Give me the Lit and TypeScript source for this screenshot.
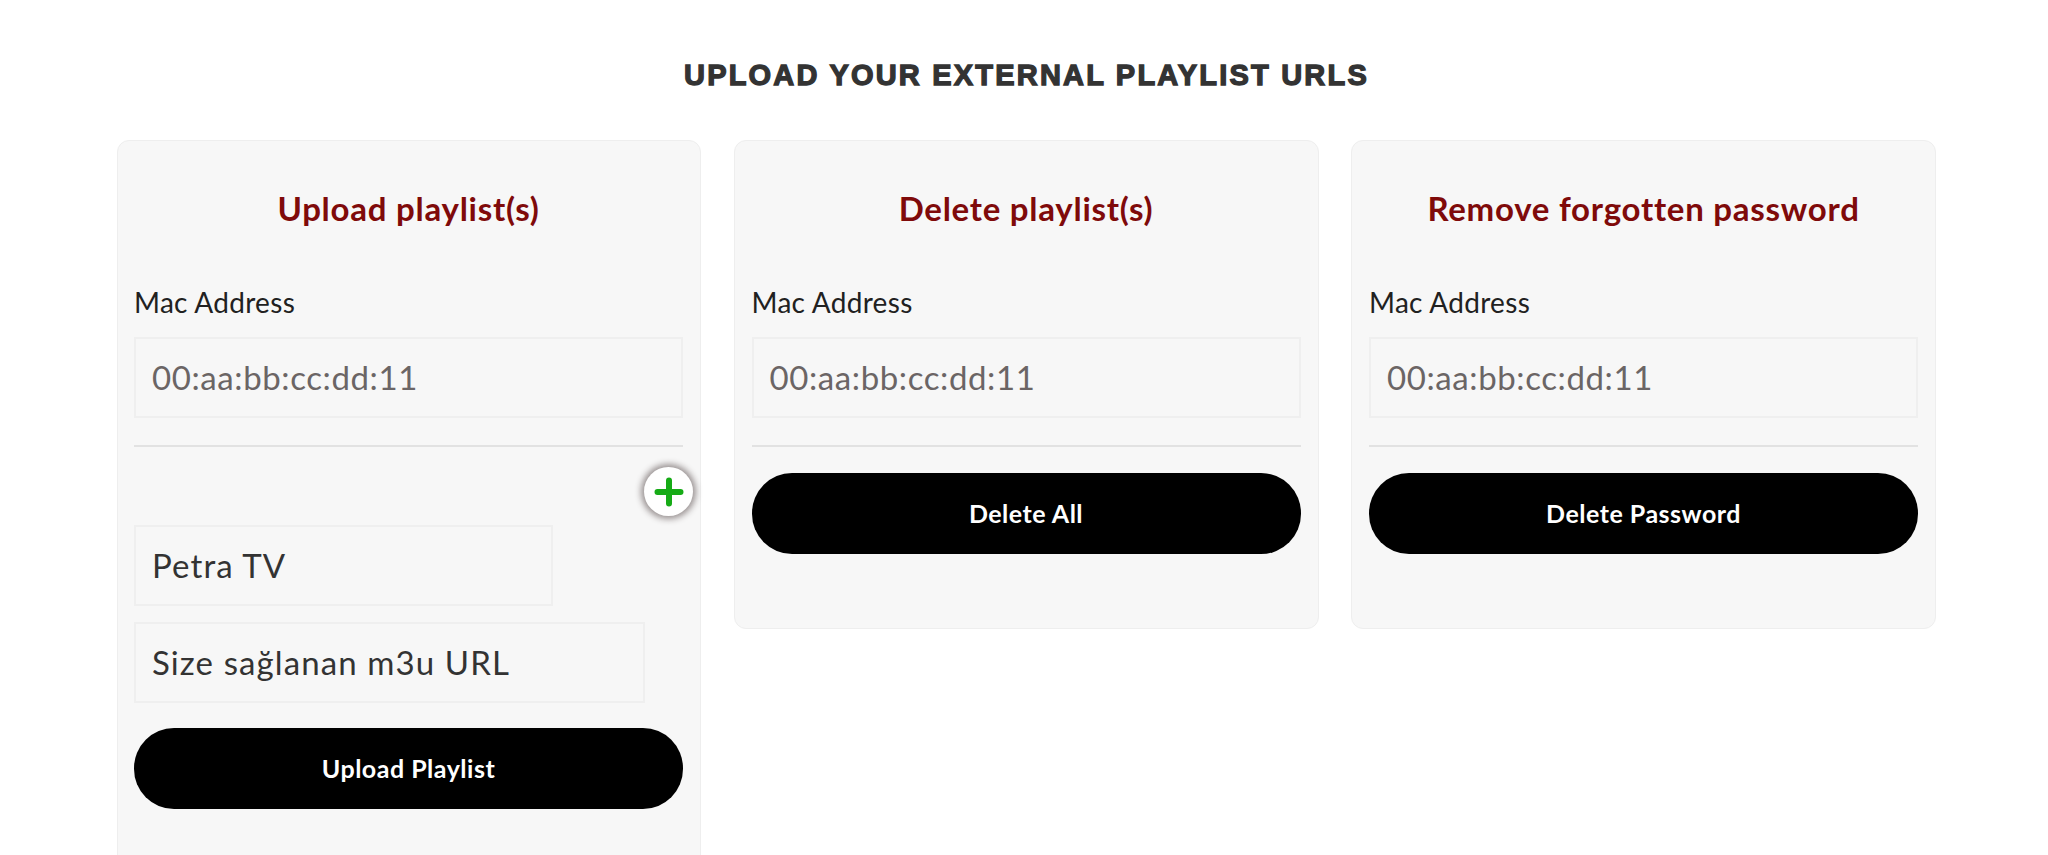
import { LitElement, html, css } from "lit";
import { customElement } from "lit/decorators.js";

@customElement("app-root")
export class AppRoot extends LitElement {
  static styles = css`
    :host {
      display: block;
      height: 855px;
      overflow: hidden;
      background: #fff;
      font-family: "Lato", "Noto Sans", sans-serif;
      color: #212121;
    }
    .page {
      padding: 58px 112px 0 117px;
    }
    h1 {
      margin: 0 0 48px;
      height: 34px;
      line-height: 34px;
      text-align: center;
      font-family: "Liberation Sans", Arial, sans-serif;
      font-weight: 700;
      font-size: 29px;
      letter-spacing: 2.2px;
      color: #333;
      -webkit-text-stroke: 1.3px #333;
    }
    .grid {
      display: grid;
      grid-template-columns: 584px 585px 585px;
      column-gap: 32.5px;
      align-items: start;
    }
    .card {
      box-sizing: border-box;
      background: #f7f7f7;
      border: 1px solid #eeeeee;
      border-radius: 12px;
      padding: 0 17px 74px;
      display: flex;
      flex-direction: column;
    }
    .card.tall {
      min-height: 760px;
      padding-left: 16px;
    }
    h2 {
      margin: 47px 0 0;
      height: 40px;
      line-height: 40px;
      text-align: center;
      font-size: 33px;
      font-weight: 700;
      letter-spacing: 0.75px;
      color: #7f0a0a;
    }
    label {
      display: block;
      margin-top: 54px;
      height: 40px;
      line-height: 40px;
      font-size: 28px;
      letter-spacing: 0.3px;
    }
    .field {
      box-sizing: border-box;
      height: 81px;
      border: 2px solid #efefef;
      display: flex;
      align-items: center;
      padding: 0 16px 2px;
      font-size: 33px;
      letter-spacing: 1.1px;
      color: #333;
    }
    .mac {
      margin-top: 15px;
      letter-spacing: 0.6px;
      color: #6b6565;
    }
    .name {
      width: 419px;
    }
    .url {
      width: 511px;
      margin-top: 16px;
    }
    hr {
      margin: 27px 0 0;
      border: 0;
      height: 2px;
      background: #e2e2e2;
    }
    .add-row {
      display: flex;
      justify-content: flex-end;
      margin: 20px -10px 9px 0;
    }
    .add {
      box-sizing: border-box;
      width: 49px;
      height: 49px;
      border-radius: 50%;
      border: 0;
      padding: 1px 0 0;
      background: #fff;
      box-shadow: 0 0 6px 3px #999292;
      display: flex;
      align-items: center;
      justify-content: center;
    }
    .btn {
      display: block;
      width: 100%;
      height: 81px;
      margin-top: 25px;
      padding: 0 0 2px;
      border: 0;
      border-radius: 40px;
      background: #000;
      color: #fff;
      font-family: inherit;
      font-weight: 700;
      font-size: 25px;
      letter-spacing: 0.5px;
    }
    .sep {
      margin-top: 26px;
    }
  `;

  render() {
    return html`
      <div class="page">
        <h1>UPLOAD YOUR EXTERNAL PLAYLIST URLS</h1>
        <div class="grid">
          <section class="card tall">
            <h2>Upload playlist(s)</h2>
            <label>Mac Address</label>
            <div class="field mac">00:aa:bb:cc:dd:11</div>
            <hr />
            <div class="add-row">
              <button class="add" aria-label="Add">
                <svg width="30" height="30" viewBox="0 0 30 30">
                  <path d="M15 3.5V26.5M3.5 15H26.5" stroke="#16ab16" stroke-width="6" stroke-linecap="round" fill="none" />
                </svg>
              </button>
            </div>
            <div class="field name">Petra TV</div>
            <div class="field url">Size sağlanan m3u URL</div>
            <button class="btn">Upload Playlist</button>
          </section>
          <section class="card">
            <h2>Delete playlist(s)</h2>
            <label>Mac Address</label>
            <div class="field mac">00:aa:bb:cc:dd:11</div>
            <hr />
            <button class="btn sep">Delete All</button>
          </section>
          <section class="card">
            <h2>Remove forgotten password</h2>
            <label>Mac Address</label>
            <div class="field mac">00:aa:bb:cc:dd:11</div>
            <hr />
            <button class="btn sep">Delete Password</button>
          </section>
        </div>
      </div>
    `;
  }
}
